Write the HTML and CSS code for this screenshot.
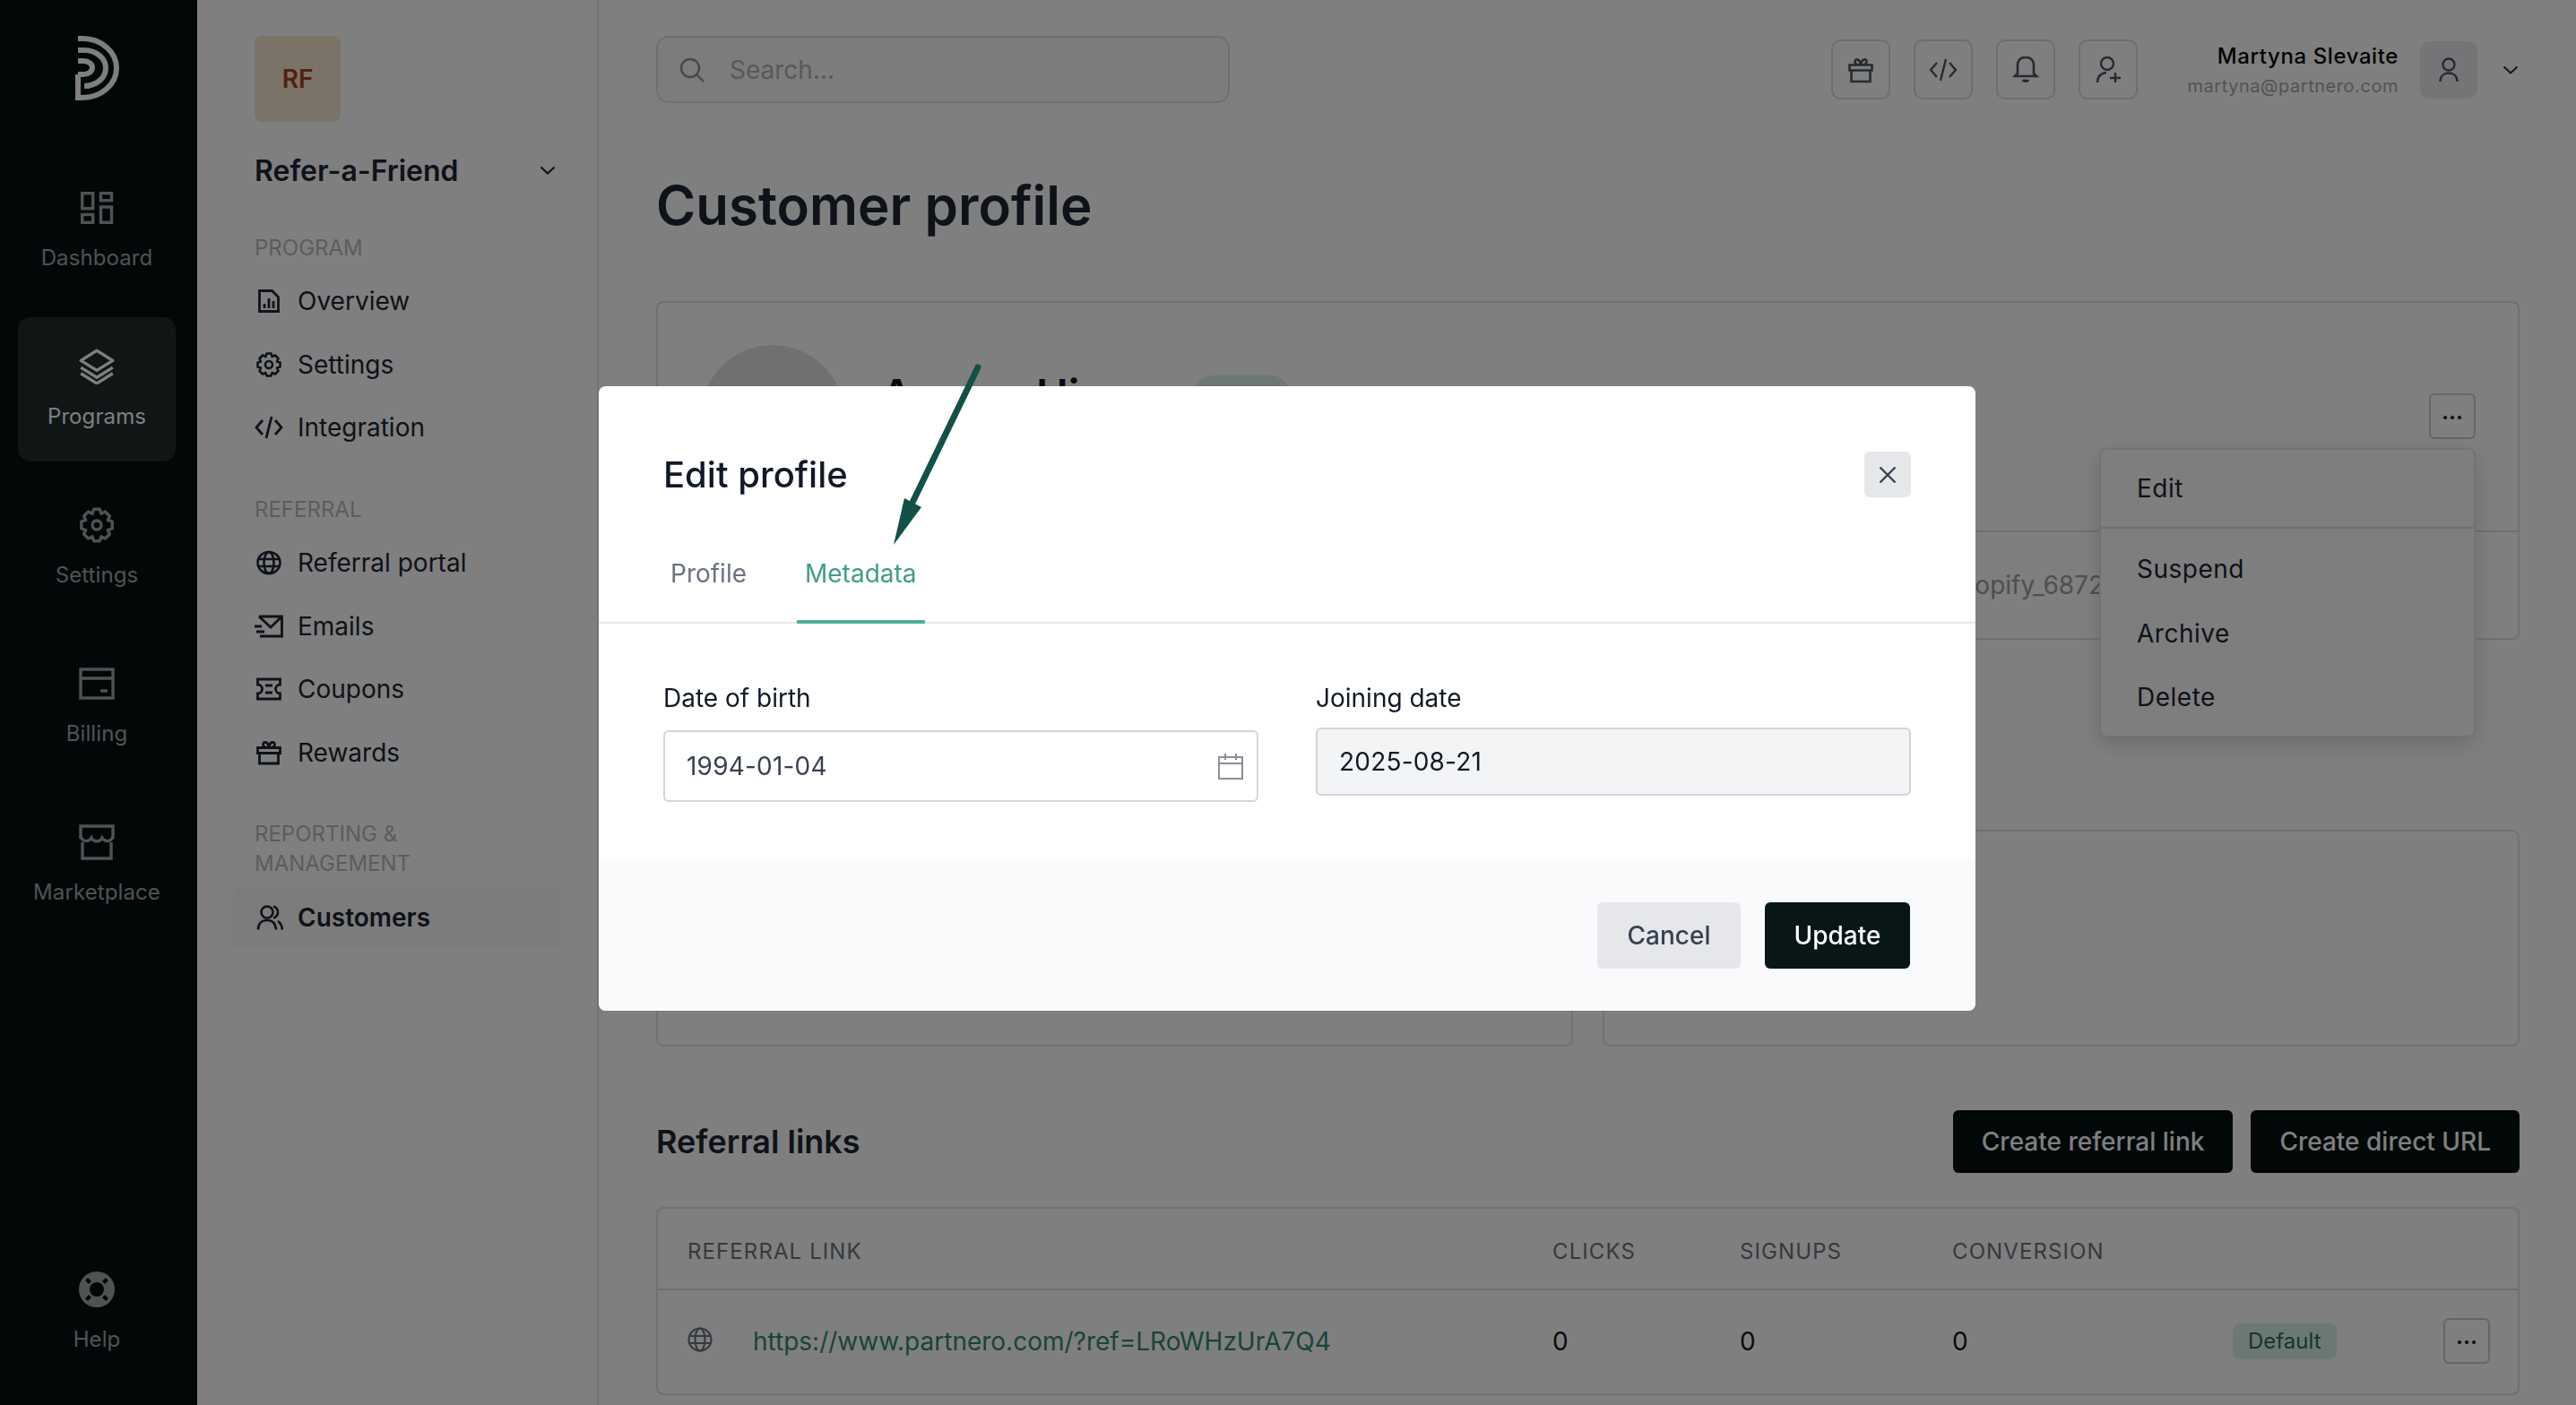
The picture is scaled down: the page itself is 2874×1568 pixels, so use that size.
FILE: index.html
```html
<!DOCTYPE html>
<html lang="en">
<head>
  <meta charset="UTF-8">
  <title>Customer profile</title>
  <link rel="stylesheet" href="styles.css">
</head>
<body>
  <aside class="rail">
    <svg class="logo" viewBox="0 0 49 72" fill="none" stroke="#fff" stroke-width="6">
      <path d="M3 3h5a38 33 0 0 1 0 66H3V43"/>
      <path d="M3 16h7a24 20 0 0 1 0 40"/>
      <path d="M3 43h6a10 7.5 0 0 0 0-15H3"/>
    </svg>
    <a class="rail-item">
      <svg viewBox="-2 -2 40 40" fill="none" stroke="currentColor" stroke-width="3.4"><rect x="1.7" y="1.7" width="12" height="17"/><rect x="22.5" y="1.7" width="12" height="8"/><rect x="1.7" y="25.5" width="12" height="8.8"/><rect x="22.5" y="17" width="12" height="17.3"/></svg>
      <span>Dashboard</span>
    </a>
    <a class="rail-item active">
      <svg viewBox="0 0 36 36" fill="none" stroke="currentColor" stroke-width="3" stroke-linejoin="round"><path d="M18 2 34 12 18 22 2 12z"/><path d="M2 19l16 10 16-10"/><path d="M2 25l16 10 16-10"/></svg>
      <span>Programs</span>
    </a>
    <a class="rail-item">
      <svg viewBox="0 0 36 36" fill="none" stroke="currentColor" stroke-width="3" stroke-linejoin="round"><path d="M15 2h6l1.500 4.500 4-2 4.500 4.500-2 4 4.500 1.500v7L29 23l2 4-4.500 4.500-4-2L21 34h-6l-1.500-4.500-4 2L5 27l2-4-4.500-1.500v-7L7 13l-2-4 4.500-4.500 4 2z"/><circle cx="18" cy="18" r="4.500"/></svg>
      <span>Settings</span>
    </a>
    <a class="rail-item">
      <svg viewBox="0 0 40 36" fill="none" stroke="currentColor" stroke-width="3.400"><rect x="2" y="2" width="36" height="32"/><path d="M2 12h36"/><path d="M24 26h8"/></svg>
      <span>Billing</span>
    </a>
    <a class="rail-item">
      <svg viewBox="0 0 40 40" fill="none" stroke="currentColor" stroke-width="3.400"><path d="M2 16V2h36v14"/><path d="M4 20v18h32V20"/><path d="M2 14c3 6 9 6 12 1 2 5 10 5 12 0 3 5 9 5 12-1"/></svg>
      <span>Marketplace</span>
    </a>
    <a class="rail-item help">
      <svg viewBox="0 0 40 40"><circle cx="20" cy="20" r="20" fill="currentColor"/><circle cx="20" cy="20" r="8" fill="#041010"/><path d="M7 10l3-3 4 4-3 3zM30 7l3 3-4 4-3-3zM7 30l3 3 4-4-3-3zM33 30l-3 3-4-4 3-3z" fill="#041010"/></svg>
      <span>Help</span>
    </a>
  </aside>

  <nav class="panel">
    <div class="program-tile">RF</div>
    <div class="program-name">
      <span>Refer-a-Friend</span>
      <svg class="chev" viewBox="0 0 18 10" fill="none" stroke="currentColor" stroke-width="2.200"><path d="M1.500 1.500 9 8.500l7.500-7"/></svg>
    </div>

    <div class="nav-label first">PROGRAM</div>
    <a class="nav-row">
      <svg viewBox="0 0 32 28" fill="none" stroke="currentColor" stroke-width="2.800"><path d="M5.500 2.500h14l7 7v16h-21z"/><path d="M11 22v-5M16 22V11M21 22v-8"/></svg>
      Overview
    </a>
    <a class="nav-row">
      <svg viewBox="0 0 32 28" fill="none" stroke="currentColor" stroke-width="2.600" stroke-linejoin="round"><path d="M13.500 1.500h5l1 3.500 3.500-1.500 3.500 3.500-1.500 3.500 3.500 1v5l-3.500 1 1.500 3.500-3.500 3.500-3.500-1.500-1 3.500h-5l-1-3.500-3.500 1.500-3.500-3.500 1.500-3.500-3.500-1v-5l3.500-1-1.500-3.500 3.500-3.500 3.500 1.500z"/><circle cx="16" cy="14" r="4"/></svg>
      Settings
    </a>
    <a class="nav-row">
      <svg viewBox="0 0 32 28" fill="none" stroke="currentColor" stroke-width="2.800"><path d="M9 6 2 14l7 8M23 6l7 8-7 8M19 2l-6 24"/></svg>
      Integration
    </a>

    <div class="nav-label">REFERRAL</div>
    <a class="nav-row">
      <svg viewBox="0 0 32 28" fill="none" stroke="currentColor" stroke-width="2.600"><ellipse cx="16" cy="14" rx="12.500" ry="12"/><ellipse cx="16" cy="14" rx="5.500" ry="12"/><path d="M4 10h24M4 18h24"/></svg>
      Referral portal
    </a>
    <a class="nav-row">
      <svg viewBox="0 0 32 28" fill="none" stroke="currentColor" stroke-width="2.800"><path d="M5 3h25.500v22H6M5 3l13 12L30.500 3M0 14h8M2 20h9"/></svg>
      Emails
    </a>
    <a class="nav-row">
      <svg viewBox="0 0 32 28" fill="none" stroke="currentColor" stroke-width="2.800"><path d="M3.500 3h25v6a5 5 0 0 0 0 10v6h-25v-6a5 5 0 0 0 0-10z"/><path d="M12 10h8M12 18h8"/></svg>
      Coupons
    </a>
    <a class="nav-row">
      <svg viewBox="0 0 32 28" fill="none" stroke="currentColor" stroke-width="2.800"><path d="M3.500 8.500h25v6h-25zM5.500 14.500v11.500h21V14.500M16 8.500c-5.500 0-6.500-1.500-6.500-3.500 0-4 5.500-4 6.500 3.500zm0 0c5.500 0 6.500-1.500 6.500-3.500 0-4-5.500-4-6.500 3.500z"/></svg>
      Rewards
    </a>

    <div class="nav-label reporting">REPORTING &amp;<br>MANAGEMENT</div>
    <a class="nav-row current">
      <svg viewBox="0 0 32 28" fill="none" stroke="currentColor" stroke-width="2.600"><circle cx="14" cy="8" r="6.500"/><path d="M4 27.500c0-7 4-10.500 10-10.500s9.500 3.500 10 10.500M21 1.500c3 1 5 3.500 5 6.500s-2 5.500-5 6.500M26 18c3 2 4.500 5 5 9.500"/></svg>
      Customers
    </a>
  </nav>

  <main class="main">
    <header class="topbar">
      <div class="search">
        <svg viewBox="0 0 28 28" fill="none" stroke="currentColor" stroke-width="2.400"><circle cx="12" cy="12" r="10"/><path d="M19.500 19.500 27 27"/></svg>
        <span>Search...</span>
      </div>
      <div class="top-actions">
        <button class="square">
          <svg viewBox="0 0 32 30" fill="none" stroke="currentColor" stroke-width="2.600"><path d="M3.500 9.500h25v6h-25zM5.500 15.500v12.500h21V15.500M16 9.500c-5.500 0-6.500-1.500-6.500-3.500 0-4 5.500-4 6.500 3.500zm0 0c5.500 0 6.500-1.500 6.500-3.500 0-4-5.500-4-6.500 3.500z"/></svg>
        </button>
        <button class="square">
          <svg viewBox="0 0 32 30" fill="none" stroke="currentColor" stroke-width="2.400"><path d="M9 7 2 15l7 8M23 7l7 8-7 8M19 3l-6 24"/></svg>
        </button>
        <button class="square">
          <svg viewBox="0 0 32 30" fill="none" stroke="currentColor" stroke-width="2.600"><path d="M4 22h24l-3-3V10c0-6-4-9-9-9s-9 3-9 9v9z"/><path d="M13 26c1 2 5 2 6 0" stroke-width="3"/></svg>
        </button>
        <button class="square">
          <svg viewBox="0 0 32 30" fill="none" stroke="currentColor" stroke-width="2.400"><circle cx="15" cy="8" r="7"/><path d="M4 29c0-6 3-10 10-11M18 24h12M24 18v11"/></svg>
        </button>
      </div>
      <div class="user">
        <strong>Martyna Slevaite</strong>
        <small>martyna@partnero.com</small>
      </div>
      <div class="user-pic">
        <svg viewBox="0 0 22 28" fill="none" stroke="currentColor" stroke-width="2.400"><circle cx="11" cy="8" r="6.500"/><path d="M1.500 27c0-6 4-9.500 9.500-9.500s9.500 3.500 9.500 9.500"/></svg>
      </div>
      <svg class="chev user-chev" viewBox="0 0 18 10" fill="none" stroke="currentColor" stroke-width="2"><path d="M1.500 1.500 9 8.500l7.500-7"/></svg>
    </header>

    <h1>Customer profile</h1>

    <section class="card profile-card">
      <div class="profile-top">
        <div class="avatar"></div>
        <div class="profile-name">Amara Hines</div>
        <span class="badge status">Active</span>
        <button class="dots">...</button>
      </div>
      <div class="profile-meta">shopify_6872</div>
      <div class="menu">
        <div class="menu-group first-group">Edit</div>
        <div class="menu-group">
          <div>Suspend</div>
          <div>Archive</div>
          <div>Delete</div>
        </div>
      </div>
    </section>

    <div class="two-cards">
      <section class="card"></section>
      <section class="card"></section>
    </div>

    <div class="links-head">
      <h2>Referral links</h2>
      <button class="dark-btn">Create referral link</button>
      <button class="dark-btn">Create direct URL</button>
    </div>

    <section class="card links">
      <div class="links-row links-header">
        <span>REFERRAL LINK</span>
        <span>CLICKS</span>
        <span>SIGNUPS</span>
        <span>CONVERSION</span>
      </div>
      <div class="links-row link-data">
        <span class="link-cell">
          <svg viewBox="0 0 28 28" fill="none" stroke="currentColor" stroke-width="2.200"><circle cx="14" cy="14" r="12.500"/><ellipse cx="14" cy="14" rx="5.500" ry="12.500"/><path d="M2 10h24M2 18h24"/></svg>
          <a>https://www.partnero.com/?ref=LRoWHzUrA7Q4</a>
        </span>
        <span>0</span>
        <span>0</span>
        <span>0</span>
        <span><span class="badge default">Default</span></span>
        <button class="dots">...</button>
      </div>
    </section>
  </main>

  <div class="overlay"></div>

  <div class="modal">
    <div class="modal-head">
      <h3>Edit profile</h3>
      <button class="close">
        <svg viewBox="0 0 20 20" fill="none" stroke="#374151" stroke-width="2.400"><path d="M1.500 1.500l17 17M18.500 1.500l-17 17"/></svg>
      </button>
    </div>
    <div class="tabs">
      <a class="tab">Profile</a>
      <a class="tab on">Metadata</a>
    </div>
    <div class="form">
      <div class="field">
        <label>Date of birth</label>
        <div class="input">
          <span>1994-01-04</span>
          <svg viewBox="0 0 30 30" fill="none" stroke="#8b8f96" stroke-width="2"><path d="M2 5h26v24H2zM2 12h26M9 1v7M21 1v7"/></svg>
        </div>
      </div>
      <div class="field readonly">
        <label>Joining date</label>
        <div class="input"><span>2025-08-21</span></div>
      </div>
    </div>
    <div class="modal-foot">
      <button class="cancel">Cancel</button>
      <button class="update">Update</button>
    </div>
  </div>

  <svg class="arrow" viewBox="0 0 2874 1568" fill="#125048">
    <path d="M1091 410 1016 565" stroke="#125048" stroke-width="7" stroke-linecap="round"/>
    <path d="M997 608 1009 556 1028 566z"/>
  </svg>
</body>
</html>
```

FILE: styles.css
```css
* {
  box-sizing: border-box;
}
html, body {
  margin: 0;
  height: 1568px;
  overflow: hidden;
}
body {
  display: flex;
  font-family: Inter, "Noto Sans", sans-serif;
  font-size: 28px;
  color: #1c2433;
  background: #fff;
}
button {
  font: inherit;
  cursor: pointer;
}
h1, h2, h3 {
  margin: 0;
}

/* left rail */
.rail {
  width: 220px;
  flex: none;
  height: 1568px;
  background: #041010;
  display: flex;
  flex-direction: column;
  align-items: center;
  gap: 16px;
  padding: 40px 4px 0 0;
  color: #a0a5a8;
}
.logo {
  width: 49px;
  height: 72px;
  margin-bottom: 49px;
}
.rail-item {
  width: 176px;
  height: 161px;
  border-radius: 14px;
  display: flex;
  flex-direction: column;
  align-items: center;
  padding-top: 35px;
  font-size: 24px;
  letter-spacing: .1px;
}
.rail-item svg {
  width: 40px;
  height: 40px;
  margin-bottom: 18px;
}
.rail-item span {
  line-height: 36px;
}
.rail-item.active {
  background: #202c2c;
  color: #fff;
}
.rail-item.help {
  margin-top: auto;
  margin-bottom: 53px;
  height: 96px;
  padding-top: 0;
}

/* program panel */
.panel {
  width: 448px;
  flex: none;
  height: 1568px;
  border-right: 2px solid #e6e6e8;
  padding: 40px 46px 0 64px;
}
.program-tile {
  width: 96px;
  height: 96px;
  border-radius: 8px;
  background: #f8e6d0;
  color: #a8401c;
  font-weight: 600;
  display: flex;
  align-items: center;
  justify-content: center;
}
.program-name {
  margin-top: 34px;
  height: 40px;
  font-size: 32px;
  font-weight: 600;
  display: flex;
  align-items: center;
  justify-content: space-between;
}
.chev {
  width: 18px;
  height: 10px;
}
.nav-label {
  margin: 40px 0 8px;
  font-size: 24px;
  line-height: 33px;
  color: #b6b9c2;
}
.nav-label.first {
  margin-top: 50px;
  margin-bottom: 8px;
}
.nav-label.reporting {
  margin-top: 39px;
  margin-bottom: 10px;
}
.nav-row {
  height: 70.400px;
  display: flex;
  align-items: center;
  gap: 16px;
}
.nav-row svg {
  width: 32px;
  height: 28px;
  flex: none;
}
.nav-row.current {
  width: 366px;
  height: 68px;
  margin-left: -24px;
  padding-left: 24px;
  background: #f8f8f8;
  border-radius: 8px;
  font-weight: 600;
}

/* main column */
.main {
  flex: 1;
  min-width: 0;
  padding: 40px 63px 0 64px;
}
.topbar {
  display: flex;
  align-items: center;
  height: 75px;
}
.search {
  width: 640px;
  height: 75px;
  border: 2px solid #dfdfe2;
  border-radius: 14px;
  background: #f8f8f8;
  display: flex;
  align-items: center;
  padding-left: 24px;
  gap: 28px;
  color: #b0b2b8;
}
.search svg {
  width: 28px;
  height: 28px;
  color: #8e9096;
}
.top-actions {
  display: flex;
  gap: 26px;
  margin-left: auto;
}
.square {
  width: 66px;
  height: 67px;
  border: 2px solid #dcdcdf;
  border-radius: 10px;
  background: none;
  color: #4b5563;
  padding: 0;
  display: flex;
  align-items: center;
  justify-content: center;
}
.square svg {
  width: 32px;
  height: 30px;
}
.user {
  margin-left: 55px;
  display: flex;
  flex-direction: column;
  align-items: flex-end;
}
.user strong {
  font-weight: 500;
  font-size: 24px;
  line-height: 36px;
  letter-spacing: .6px;
  color: #05070a;
}
.user small {
  font-size: 20px;
  line-height: 30px;
  letter-spacing: .55px;
  color: #a4a6ac;
}
.user-pic {
  width: 64px;
  height: 64px;
  margin-left: 24px;
  border-radius: 10px;
  background: #eaeaee;
  color: #4b5563;
  display: flex;
  align-items: center;
  justify-content: center;
}
.user-pic svg {
  width: 22px;
  height: 28px;
}
.user-chev {
  margin-left: 28px;
  margin-right: 1px;
  color: #1c2433;
}
h1 {
  margin-top: 78px;
  font-size: 60px;
  line-height: 72px;
  font-weight: 600;
}
.card {
  border: 2px solid #e2e2e5;
  border-radius: 8px;
}
.profile-card {
  position: relative;
  margin-top: 71px;
  height: 378px;
}
.profile-top {
  height: 256px;
  display: flex;
  align-items: flex-start;
  padding: 47px 47px 0 48px;
  border-bottom: 2px solid #e2e2e5;
}
.avatar {
  width: 160px;
  height: 160px;
  border-radius: 50%;
  background: #e0e0e3;
}
.profile-name {
  margin: 27px 0 0 41px;
  font-size: 48px;
  line-height: 58px;
  font-weight: 600;
  word-spacing: 9px;
  color: #111622;
}
.badge {
  border-radius: 8px;
  font-size: 24px;
}
.status {
  margin: 34px 0 0 44px;
  width: 106px;
  height: 40px;
  border-radius: 20px;
  background: #d9f0e8;
  color: #d9f0e8;
}
.dots {
  width: 52px;
  height: 51px;
  border: 2px solid #c9cbd2;
  border-radius: 6px;
  background: none;
  color: #1c2433;
  font-weight: 700;
  font-size: 24px;
  line-height: 30px;
  padding: 0 0 10px;
}
.profile-top .dots {
  margin: 54px 0 0 auto;
}
.profile-meta {
  height: 118px;
  display: flex;
  align-items: center;
  padding-left: 1438px;
  color: #9a9ca6;
  white-space: nowrap;
}
.menu {
  position: absolute;
  right: 47px;
  top: 162px;
  width: 420px;
  height: 323px;
  background: #fdfdfd;
  border: 2px solid #e5e5e9;
  border-radius: 8px;
  box-shadow: 0 8px 24px rgba(0, 0, 0, .16);
  letter-spacing: .5px;
  padding-left: 40px;
}
.menu-group {
  line-height: 71.500px;
}
.first-group {
  height: 88px;
  margin-left: -40px;
  padding-left: 40px;
  line-height: 86px;
  border-bottom: 2px solid #dedee2;
  margin-bottom: 10px;
}
.two-cards {
  display: grid;
  grid-template-columns: 1fr 1fr;
  gap: 33px;
  margin-top: 212px;
}
.two-cards .card {
  height: 242px;
}
.links-head {
  display: flex;
  align-items: center;
  gap: 20px;
  margin-top: 71px;
}
h2 {
  font-size: 36px;
  font-weight: 600;
  margin-right: auto;
}
.dark-btn {
  height: 70px;
  padding: 0 32px;
  border: 0;
  border-radius: 6px;
  background: #041010;
  color: #fff;
  font-weight: 500;
}
.links {
  margin-top: 38px;
  height: 210px;
}
.links-row {
  display: grid;
  grid-template-columns: 965px 209px 237px 313px 235px 52px;
  align-items: center;
  padding-left: 33px;
  height: 117px;
  color: #111622;
}
.links-header {
  height: 91px;
  padding-top: 6px;
  border-bottom: 2px solid #dcdcdf;
  font-size: 24px;
  letter-spacing: 1.100px;
  color: #6b7280;
}
.link-data {
  padding-bottom: 4px;
}
.link-cell {
  display: flex;
  align-items: center;
  gap: 45px;
  color: #6b7280;
}
.link-cell svg {
  width: 28px;
  height: 28px;
  margin-top: -4px;
}
.link-cell a {
  color: #2f8a74;
}
.default {
  display: inline-block;
  padding: 0 17px;
  line-height: 40px;
  background: #d9f0e8;
  color: #2a6b5a;
}

/* dialog */
.overlay {
  position: fixed;
  inset: 0;
  background: rgba(0, 0, 0, .5);
}
.modal {
  position: fixed;
  left: 668px;
  top: 431px;
  width: 1536px;
  height: 697px;
  background: #fff;
  border-radius: 8px;
  overflow: hidden;
  display: flex;
  flex-direction: column;
}
.modal-head {
  display: flex;
  align-items: center;
  justify-content: space-between;
  padding: 73px 72px 0;
}
h3 {
  font-size: 40px;
  font-weight: 500;
  color: #111827;
}
.close {
  width: 52px;
  height: 51px;
  border: 0;
  padding: 0;
  border-radius: 6px;
  background: #e5e7eb;
  display: flex;
  align-items: center;
  justify-content: center;
}
.close svg {
  width: 20px;
  height: 20px;
}
.tabs {
  display: flex;
  gap: 48px;
  margin-top: 40px;
  padding-left: 72px;
  box-shadow: inset 0 -2px #e5e7eb;
}
.tab {
  padding: 25px 8px 32px;
  line-height: 40px;
  border-bottom: 4px solid transparent;
  color: #6b7280;
}
.tab.on {
  padding-left: 9px;
  padding-right: 9px;
  border-color: #4fae9c;
  color: #3f9c88;
}
.form {
  display: grid;
  grid-template-columns: 664px 664px;
  gap: 64px;
  align-items: start;
  height: 263px;
  padding: 65px 72px 0;
}
.field label {
  display: block;
  line-height: 36px;
  margin-bottom: 18px;
  color: #111827;
}
.input {
  height: 80px;
  border: 2px solid #d1d5db;
  border-radius: 6px;
  padding: 0 14px 0 24px;
  display: flex;
  align-items: center;
  justify-content: space-between;
  color: #374151;
  letter-spacing: .2px;
}
.input svg {
  width: 30px;
  height: 30px;
}
.readonly label {
  margin-bottom: 15px;
}
.readonly .input {
  height: 76px;
  background: #f3f4f6;
  color: #111827;
}
.modal-foot {
  flex: 1;
  background: #f9fafb;
  display: flex;
  justify-content: flex-end;
  align-items: flex-start;
  gap: 27px;
  padding: 48px 73px 0 0;
}
.modal-foot button {
  height: 74px;
  border: 0;
  border-radius: 6px;
  font-weight: 500;
}
.cancel {
  width: 160px;
  background: #e5e7eb;
  color: #374151;
}
.update {
  width: 162px;
  background: #081616;
  color: #fff;
}
.arrow {
  position: fixed;
  inset: 0;
  width: 2874px;
  height: 1568px;
}
```
